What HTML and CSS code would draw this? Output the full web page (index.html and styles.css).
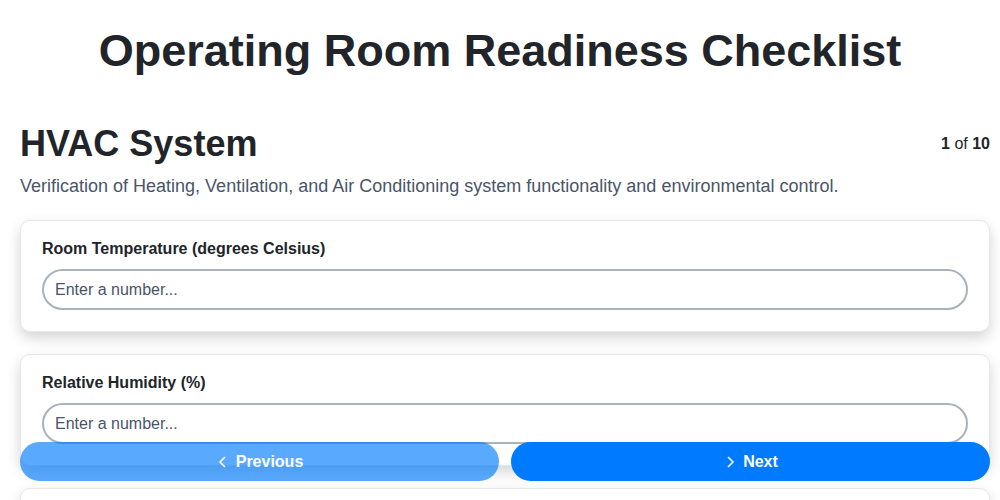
FILE: index.html
```html
<!DOCTYPE html>
<html lang="en">
<head>
    <meta charset="UTF-8">
    <meta name="viewport" content="width=device-width, initial-scale=1.0">
    <title>Operating Room Readiness Checklist</title>
    <link rel="stylesheet" href="styles.css">
</head>
<body>
    <h1 class="page-title">Operating Room Readiness Checklist</h1>

    <div class="section-header">
        <h2 class="section-title">HVAC System</h2>
        <div class="section-count"><b>1</b> of <b>10</b></div>
    </div>
    <p class="section-desc">Verification of Heating, Ventilation, and Air Conditioning system functionality and environmental control.</p>

    <div class="question-list">
        <div class="question-card">
            <label for="temp">Room Temperature (degrees Celsius)</label>
            <input type="number" id="temp" placeholder="Enter a number...">
        </div>
        <div class="question-card">
            <label for="humidity">Relative Humidity (%)</label>
            <input type="number" id="humidity" placeholder="Enter a number...">
        </div>
        <div class="question-card">
            <label for="pressure">Room Pressure Differential (Pa)</label>
            <input type="number" id="pressure" placeholder="Enter a number...">
        </div>
    </div>

    <div class="nav-buttons">
        <button type="button" class="nav-btn" disabled>
            <svg width="14" height="14" viewBox="0 0 14 14"><path d="M9 2 L4 7 L9 12" fill="none" stroke="currentColor" stroke-width="1.6"/></svg>
            Previous
        </button>
        <button type="button" class="nav-btn">
            <svg width="14" height="14" viewBox="0 0 14 14"><path d="M5 2 L10 7 L5 12" fill="none" stroke="currentColor" stroke-width="1.6"/></svg>
            Next
        </button>
    </div>
</body>
</html>
```

FILE: styles.css
```css
body {
    font-family: 'Liberation Sans', Arial, sans-serif;
    margin: 0;
    padding: 0 10px 80px 20px;
    background-color: #fff;
    color: #212529;
}

.page-title {
    font-size: 45px;
    font-weight: bold;
    text-align: center;
    margin: 25px 0 46px -10px;
    line-height: 52px;
}

.section-header {
    display: flex;
    justify-content: space-between;
    align-items: flex-start;
}

.section-title {
    font-size: 36px;
    margin: 0;
    line-height: 42px;
}

.section-count {
    font-size: 16px;
    margin-top: 12px;
}

.section-desc {
    font-size: 18px;
    color: #4a5568;
    margin: 9px 0 22px 0;
    line-height: 24px;
}

.question-list {
    display: flex;
    flex-direction: column;
    gap: 22px;
}

.question-card {
    border: 1px solid #e5e7eb;
    border-radius: 10px;
    padding: 20px 21px 21px 21px;
    box-shadow: 0 6px 14px rgba(0, 0, 0, 0.17);
    background-color: #fff;
}

.question-card label {
    display: block;
    font-size: 16px;
    font-weight: bold;
    color: #212529;
    margin: -1px 0 11px 0;
    line-height: 18px;
}

.question-card input {
    display: block;
    width: 100%;
    box-sizing: border-box;
    height: 41px;
    padding: 0 11px;
    border: 2px solid #a9b1ba;
    border-radius: 21px;
    font-family: 'Liberation Sans', Arial, sans-serif;
    font-size: 16px;
    color: #212529;
    outline: none;
}

.question-card input::placeholder {
    color: #4a5568;
}

.nav-buttons {
    position: fixed;
    left: 20px;
    right: 10px;
    bottom: 19px;
    display: flex;
    gap: 12px;
}

.nav-btn {
    flex: 1;
    height: 39px;
    border: none;
    border-radius: 20px;
    background-color: #007bff;
    color: #fff;
    font-family: 'Liberation Sans', Arial, sans-serif;
    font-size: 16px;
    font-weight: bold;
    display: flex;
    align-items: center;
    justify-content: center;
    gap: 6px;
    cursor: pointer;
}

.nav-btn:disabled {
    opacity: 0.65;
    cursor: default;
}
```
